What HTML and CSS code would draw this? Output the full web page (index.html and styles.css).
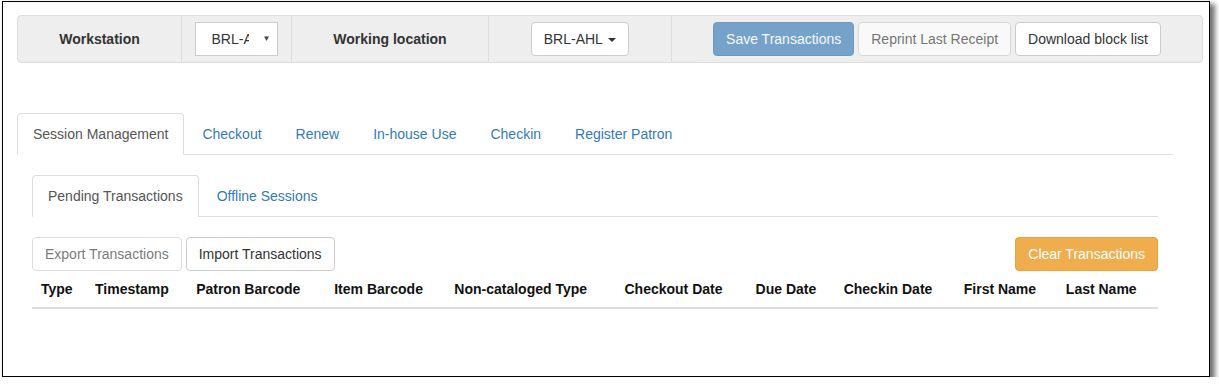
FILE: index.html
```html
<!DOCTYPE html>
<html lang="en">
<head>
    <meta charset="UTF-8">
    <meta name="viewport" content="width=device-width, initial-scale=1.0">
    <title>Offline Circulation</title>
    <link rel="stylesheet" href="styles.css">
</head>
<body>
    <div id="frame">
        <div class="toolbar">
            <div class="cell cell-label cell-ws">Workstation</div>
            <div class="cell cell-select">
                <div class="fake-select">
                    <span class="fake-select-text">BRL-AHL</span>
                    <span class="fake-select-arrow">&#9660;</span>
                </div>
            </div>
            <div class="cell cell-label cell-loc">Working location</div>
            <div class="cell cell-drop">
                <button class="btn btn-default">BRL-AHL <span class="caret"></span></button>
            </div>
            <div class="cell cell-actions">
                <button class="btn btn-primary" disabled>Save Transactions</button>
                <button class="btn btn-default" disabled>Reprint Last Receipt</button>
                <button class="btn btn-default">Download block list</button>
            </div>
        </div>

        <div class="main">
            <ul class="nav-tabs">
                <li class="active"><a>Session Management</a></li>
                <li><a>Checkout</a></li>
                <li><a>Renew</a></li>
                <li><a>In-house Use</a></li>
                <li><a>Checkin</a></li>
                <li><a>Register Patron</a></li>
            </ul>

            <div class="tab-content">
                <ul class="nav-tabs">
                    <li class="active"><a>Pending Transactions</a></li>
                    <li><a>Offline Sessions</a></li>
                </ul>

                <div class="pending">
                    <div class="actions">
                        <div>
                            <button class="btn btn-default" disabled>Export Transactions</button>
                            <button class="btn btn-default">Import Transactions</button>
                        </div>
                        <button class="btn btn-warning">Clear Transactions</button>
                    </div>
                    <table class="table">
                        <thead>
                            <tr>
                                <th class="c-type">Type</th>
                                <th class="c-time">Timestamp</th>
                                <th class="c-patron">Patron Barcode</th>
                                <th class="c-item">Item Barcode</th>
                                <th class="c-noncat">Non-cataloged Type</th>
                                <th class="c-out">Checkout Date</th>
                                <th class="c-due">Due Date</th>
                                <th class="c-in">Checkin Date</th>
                                <th class="c-first">First Name</th>
                                <th class="c-last">Last Name</th>
                            </tr>
                        </thead>
                        <tbody></tbody>
                    </table>
                </div>
            </div>
        </div>
    </div>
</body>
</html>
```

FILE: styles.css
```css
body {
    margin: 0;
    font-family: "Liberation Sans", Arial, sans-serif;
    font-size: 14px;
    line-height: 20px;
    color: #333;
    background-color: #fff;
}
#frame {
    box-sizing: border-box;
    width: 1208px;
    height: 376px;
    margin: 1px 0 0 2px;
    padding: 13px 0 0 14px;
    border: 1px solid #000;
    box-shadow: 4px 4px 5px 1px rgba(0, 0, 0, 0.55);
    background-color: #fff;
}
.toolbar {
    box-sizing: border-box;
    display: flex;
    width: 1186px;
    height: 48px;
    margin-bottom: 50px;
    background-color: #eee;
    border: 1px solid #ddd;
    border-radius: 4px;
}
.cell {
    display: flex;
    align-items: center;
    justify-content: center;
}
.cell-label {
    font-weight: bold;
    color: #333;
}
.cell-ws {
    width: 163px;
    border-right: 1px solid #ddd;
}
.cell-select {
    width: 108px;
}
.cell-loc {
    width: 196px;
    margin-left: 1px;
    border-left: 1px solid #ddd;
    border-right: 1px solid #ddd;
}
.cell-drop {
    width: 182px;
    border-right: 1px solid #ddd;
}
.cell-actions {
    flex: 1;
    gap: 4px;
}
.fake-select {
    box-sizing: border-box;
    display: flex;
    align-items: center;
    width: 83px;
    height: 34px;
    padding: 0 6px 0 16px;
    background-color: #fff;
    border: 1px solid #ccc;
    color: #333;
}
.fake-select-text {
    width: 37px;
    overflow: hidden;
    white-space: nowrap;
}
.fake-select-arrow {
    margin-left: auto;
    font-size: 8px;
    color: #444;
}
.btn {
    box-sizing: border-box;
    height: 34px;
    padding: 6px 12px;
    font-family: inherit;
    font-size: 14px;
    line-height: 20px;
    border: 1px solid transparent;
    border-radius: 4px;
    white-space: nowrap;
    cursor: pointer;
}
.btn[disabled] {
    opacity: 0.65;
    cursor: not-allowed;
}
.btn-default {
    color: #333;
    background-color: #fff;
    border-color: #ccc;
}
.btn-primary {
    color: #fff;
    background-color: #337ab7;
    border-color: #2e6da4;
}
.btn-warning {
    color: #fff;
    background-color: #f0ad4e;
    border-color: #eea236;
}
.caret {
    display: inline-block;
    width: 0;
    height: 0;
    margin-left: 2px;
    vertical-align: middle;
    border-top: 4px solid;
    border-left: 4px solid transparent;
    border-right: 4px solid transparent;
}
.main {
    width: 1156px;
}
.nav-tabs {
    display: flex;
    margin: 0;
    padding: 0;
    list-style: none;
    border-bottom: 1px solid #ddd;
}
.nav-tabs li {
    margin-bottom: -1px;
}
.nav-tabs a {
    display: block;
    margin-right: 2px;
    padding: 10px 15px;
    color: #337ab7;
    border: 1px solid transparent;
    border-radius: 4px 4px 0 0;
}
.nav-tabs li.active a {
    color: #555;
    background-color: #fff;
    border-color: #ddd #ddd transparent;
}
.tab-content {
    padding: 20px 15px 0;
}
.pending {
    padding-top: 20px;
}
.actions {
    display: flex;
    justify-content: space-between;
}
.table {
    width: 100%;
    table-layout: fixed;
    border-collapse: collapse;
}
.table th {
    box-sizing: border-box;
    padding: 8px 8px 8px 9px;
    text-align: left;
    color: #111;
    border-bottom: 2px solid #ddd;
    white-space: nowrap;
}
.c-type { width: 54px; }
.c-time { width: 101px; }
.c-patron { width: 138px; }
.c-item { width: 120px; }
.c-noncat { width: 170px; }
.c-out { width: 131px; }
.c-due { width: 88px; }
.c-in { width: 120px; }
.c-first { width: 102px; }
.c-last { width: 101px; }
```
